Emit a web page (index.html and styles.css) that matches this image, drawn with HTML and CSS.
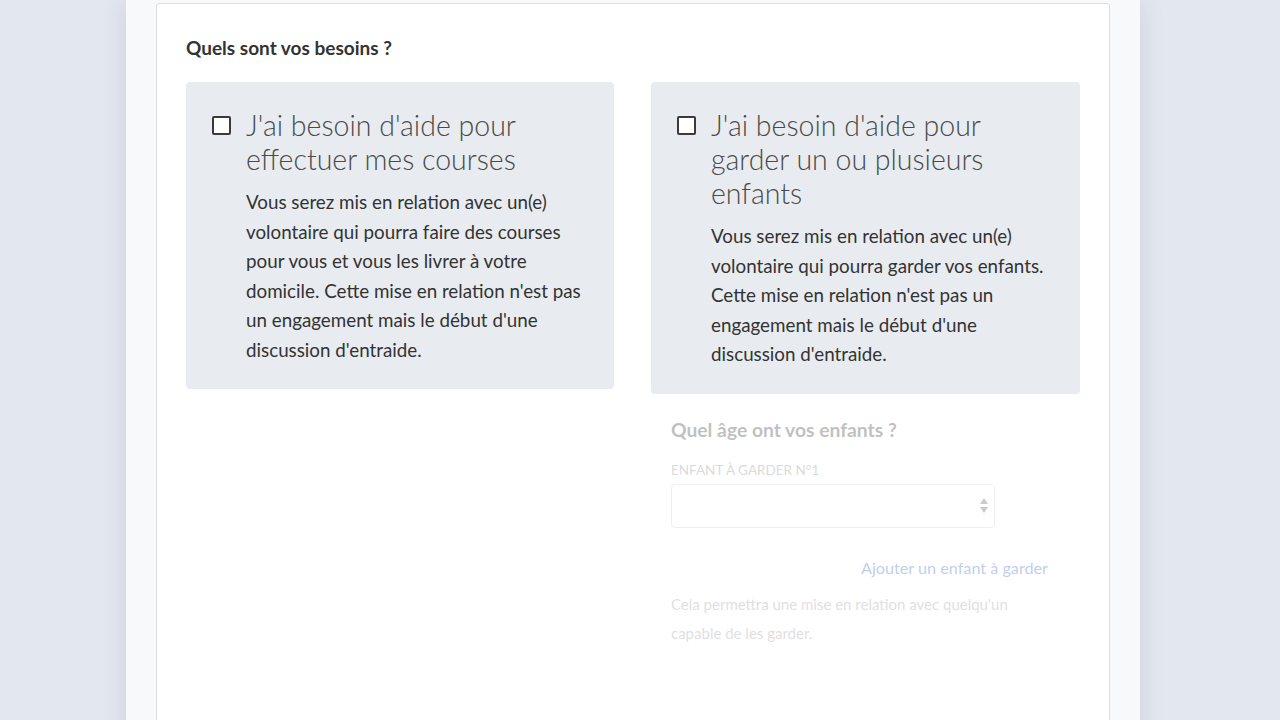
FILE: index.html
```html
<!doctype html>
<html lang="fr">
  <head>
    <meta charset="UTF-8" />
    <meta name="viewport" content="width=device-width, initial-scale=1.0" />
    <title>Quels sont vos besoins ?</title>
    <link rel="stylesheet" href="styles.css">
  </head>
  <body>
    <div class="page">
      <div class="form-card">
        <h3 class="form-title">Quels sont vos besoins ?</h3>

        <div class="needs-grid">
          <div class="need-col">
            <label class="need-option">
              <span class="need-head">
                <span class="check"></span>
                <span class="need-title">J'ai besoin d'aide pour effectuer mes courses</span>
              </span>
              <span class="need-desc">Vous serez mis en relation avec un(e) volontaire qui pourra faire des courses pour vous et vous les livrer à votre domicile. Cette mise en relation n'est pas un engagement mais le début d'une discussion d'entraide.</span>
            </label>
          </div>

          <div class="need-col">
            <label class="need-option">
              <span class="need-head">
                <span class="check"></span>
                <span class="need-title">J'ai besoin d'aide pour garder un ou plusieurs enfants</span>
              </span>
              <span class="need-desc">Vous serez mis en relation avec un(e) volontaire qui pourra garder vos enfants. Cette mise en relation n'est pas un engagement mais le début d'une discussion d'entraide.</span>
            </label>

            <div class="kids disabled">
              <h4 class="kids-title">Quel âge ont vos enfants ?</h4>
              <div class="field-label">Enfant à garder n°1</div>
              <div class="select">
                <span class="select-arrows">
                  <span class="arrow-up"></span>
                  <span class="arrow-down"></span>
                </span>
              </div>
              <div class="add-row">
                <a href="#" class="add-link">Ajouter un enfant à garder</a>
              </div>
              <p class="kids-help">Cela permettra une mise en relation avec quelqu'un capable de les garder.</p>
            </div>
          </div>
        </div>
      </div>
    </div>
  </body>
</html>
```

FILE: styles.css
```css
* {
  margin: 0;
  padding: 0;
  box-sizing: border-box;
}

body {
  font-family: Lato, 'Open Sans', sans-serif;
  background: #e3e7f0;
  color: #333;
  min-height: 100vh;
  overflow: hidden;
}

.page {
  width: 1014px;
  margin-left: 126px;
  min-height: 100vh;
  padding: 3px 30px 0;
  background: #f8f9fb;
  box-shadow: 0 0 24px rgba(40, 50, 80, 0.12);
}

.form-card {
  background: #fff;
  border: 1px solid #dcdde0;
  border-radius: 3px;
  min-height: 760px;
  padding: 29px 29px 40px;
}

.form-title {
  font-size: 19px;
  font-weight: 700;
  line-height: 30px;
  color: #333;
  margin-bottom: 19px;
}

.needs-grid {
  display: grid;
  grid-template-columns: 428px 1fr;
  gap: 37px;
  align-items: start;
}

.need-option {
  display: block;
  background: #e8ecf0;
  border-radius: 4px;
  padding: 26px 26px 25px;
  cursor: pointer;
}

.need-head {
  display: flex;
  align-items: flex-start;
  gap: 15px;
}

.check {
  flex: none;
  width: 19px;
  height: 19px;
  margin-top: 8px;
  border: 2px solid #3a3a3a;
  border-radius: 2px;
  background: #fff;
}

.need-title {
  font-size: 28.5px;
  font-weight: 300;
  line-height: 34px;
  color: #4a4a4a;
}

.need-desc {
  display: block;
  margin: 11px 0 0 34px;
  font-size: 18.8px;
  line-height: 29.5px;
  color: #333;
}

.kids {
  padding: 20px 32px 0 20px;
}

.kids.disabled {
  opacity: 0.3;
}

.kids-title {
  font-size: 19.3px;
  font-weight: 700;
  line-height: 32px;
  margin-bottom: 16px;
}

.field-label {
  font-size: 13.5px;
  text-transform: uppercase;
  color: #888;
  line-height: 16px;
  margin-bottom: 6px;
}

.select {
  position: relative;
  width: 324px;
  height: 44px;
  border: 1px solid #ccc;
  border-radius: 4px;
  background: #fff;
}

.select-arrows {
  position: absolute;
  right: 6px;
  top: 13px;
  display: flex;
  flex-direction: column;
  gap: 3px;
}

.arrow-up,
.arrow-down {
  width: 0;
  height: 0;
  border-left: 4px solid transparent;
  border-right: 4px solid transparent;
}

.arrow-up {
  border-bottom: 6px solid #555;
}

.arrow-down {
  border-top: 6px solid #555;
}

.add-row {
  display: flex;
  justify-content: flex-end;
  margin-top: 26px;
}

.add-link {
  font-size: 16.2px;
  line-height: 28px;
  color: #2d5fcc;
  text-decoration: none;
}

.kids-help {
  margin-top: 8px;
  font-size: 15px;
  line-height: 29px;
  color: #999;
  max-width: 350px;
}
```
